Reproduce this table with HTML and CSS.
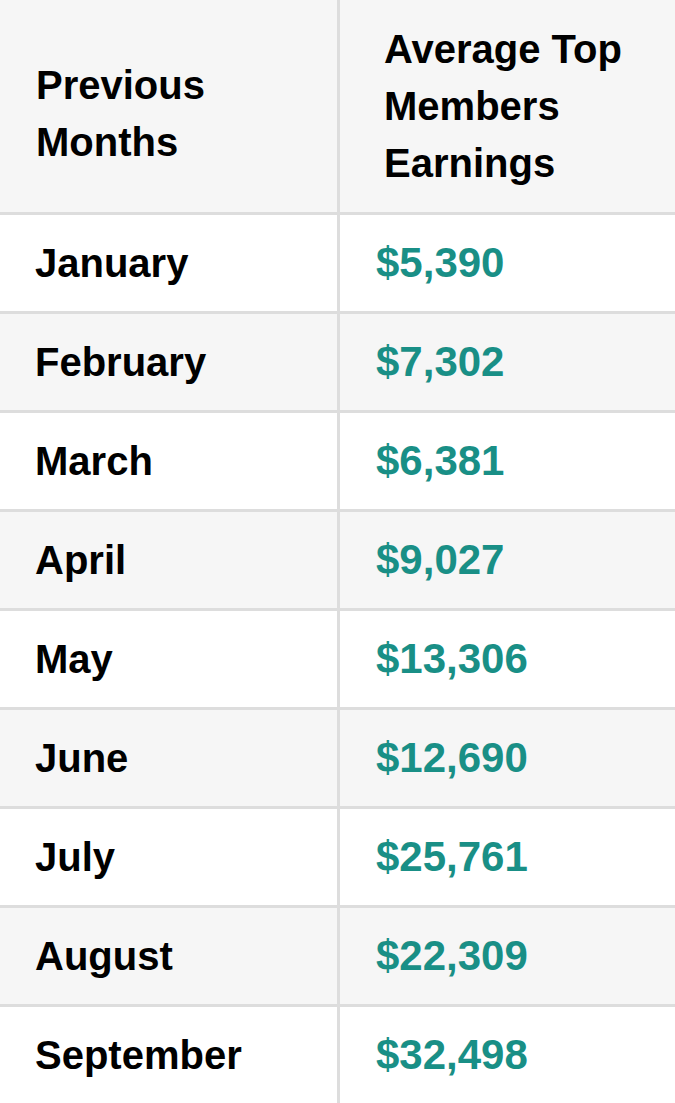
FILE: index.html
```html
<!DOCTYPE html>
<html lang="en">
<head>
<meta charset="utf-8">
<title>Average Top Members Earnings</title>
<link rel="stylesheet" href="styles.css">
</head>
<body>
<div class="table">
  <div class="row head">
    <div class="cell month-col head-left">Previous<br>Months</div>
    <div class="cell value-col head-right">Average Top<br>Members<br>Earnings</div>
  </div>
  <div class="row">
    <div class="cell month-col">January</div>
    <div class="cell value-col value">$5,390</div>
  </div>
  <div class="row alt">
    <div class="cell month-col">February</div>
    <div class="cell value-col value">$7,302</div>
  </div>
  <div class="row">
    <div class="cell month-col">March</div>
    <div class="cell value-col value">$6,381</div>
  </div>
  <div class="row alt">
    <div class="cell month-col">April</div>
    <div class="cell value-col value">$9,027</div>
  </div>
  <div class="row">
    <div class="cell month-col">May</div>
    <div class="cell value-col value">$13,306</div>
  </div>
  <div class="row alt">
    <div class="cell month-col">June</div>
    <div class="cell value-col value">$12,690</div>
  </div>
  <div class="row">
    <div class="cell month-col">July</div>
    <div class="cell value-col value">$25,761</div>
  </div>
  <div class="row alt">
    <div class="cell month-col">August</div>
    <div class="cell value-col value">$22,309</div>
  </div>
  <div class="row last">
    <div class="cell month-col">September</div>
    <div class="cell value-col value">$32,498</div>
  </div>
</div>
</body>
</html>
```

FILE: styles.css
```css
html, body {
  margin: 0;
  padding: 0;
  background: #ffffff;
}

body {
  font-family: "Liberation Sans", Arial, Helvetica, sans-serif;
  color: #000000;
  font-weight: 700;
}

.table {
  width: 675px;
}

.row {
  display: grid;
  grid-template-columns: 340px 1fr;
  height: 99px;
  box-sizing: border-box;
  border-bottom: 3px solid #dddddd;
  background: #ffffff;
}

.row.alt {
  background: #f6f6f6;
}

.row.last {
  height: 96px;
  border-bottom: none;
}

.row.head {
  height: 215px;
  background: #f6f6f6;
}

.cell {
  display: flex;
  align-items: center;
  box-sizing: border-box;
}

.month-col {
  border-right: 3px solid #dddddd;
  padding-left: 35px;
  font-size: 40px;
}

.value-col {
  padding-left: 36px;
}

.value {
  font-size: 42px;
  color: #198f86;
}

.head-left {
  font-size: 40px;
  line-height: 57px;
  padding-left: 36px;
  padding-top: 16px;
}

.head-right {
  font-size: 40px;
  line-height: 57px;
  padding-left: 44px;
}
```
